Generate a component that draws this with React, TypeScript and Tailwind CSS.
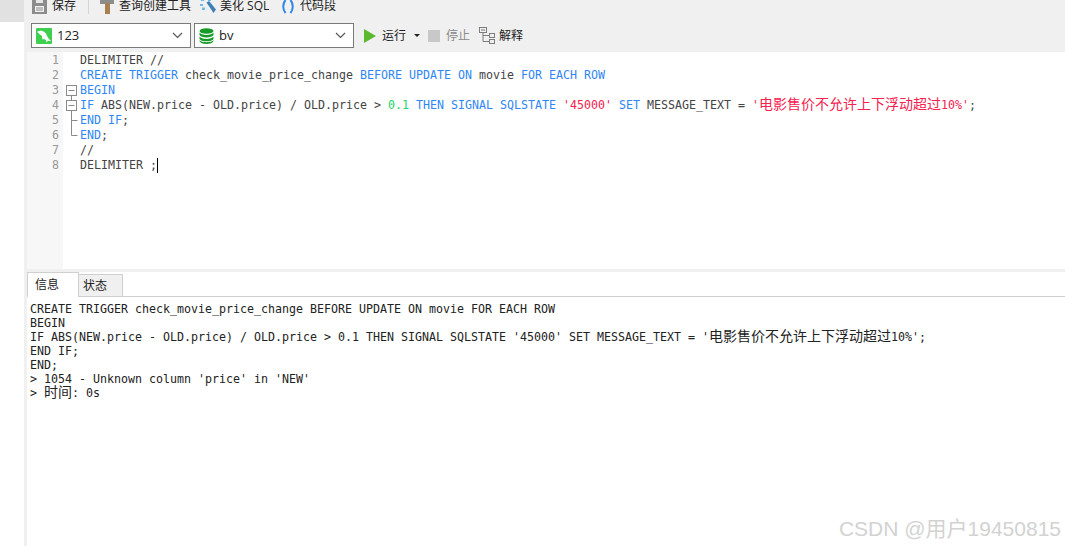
import React from 'react';

const ui = "font-['Open_Sans','Noto_Sans_CJK_SC',sans-serif]";
const mono = "font-['DejaVu_Sans_Mono','Noto_Sans_CJK_SC',monospace]";

const Kw = ({ children }: { children: React.ReactNode }) => <span className="text-[#2f86f5]">{children}</span>;
const Str = ({ children }: { children: React.ReactNode }) => <span className="text-[#f5214f]">{children}</span>;
const Num = ({ children }: { children: React.ReactNode }) => <span className="text-[#22d46a]">{children}</span>;
const Cjk = ({ children }: { children: React.ReactNode }) => <span className="text-[14px] leading-[0]">{children}</span>;

const codeLines: React.ReactNode[] = [
  <>DELIMITER //</>,
  <>
    <Kw>CREATE TRIGGER</Kw> check_movie_price_change <Kw>BEFORE UPDATE ON</Kw> movie <Kw>FOR EACH ROW</Kw>
  </>,
  <Kw>BEGIN</Kw>,
  <>
    <Kw>IF</Kw> ABS(NEW.price - OLD.price) / OLD.price &gt; <Num>0.1</Num> <Kw>THEN SIGNAL SQLSTATE</Kw> <Str>'45000'</Str> <Kw>SET</Kw>{' '}
    MESSAGE_TEXT = <Str>'<Cjk>电影售价不允许上下浮动超过</Cjk>10%'</Str>;
  </>,
  <>
    <Kw>END IF</Kw>;
  </>,
  <>
    <Kw>END</Kw>;
  </>,
  <>//</>,
  <>
    DELIMITER ;<span className="inline-block w-px h-[15px] bg-black align-top" />
  </>,
];

const logLines: React.ReactNode[] = [
  'CREATE TRIGGER check_movie_price_change BEFORE UPDATE ON movie FOR EACH ROW',
  'BEGIN',
  <>
    IF ABS(NEW.price - OLD.price) / OLD.price &gt; 0.1 THEN SIGNAL SQLSTATE '45000' SET MESSAGE_TEXT = '<Cjk>电影售价不允许上下浮动超过</Cjk>10%';
  </>,
  'END IF;',
  'END;',
  "> 1054 - Unknown column 'price' in 'NEW'",
  <>
    &gt; <Cjk>时间</Cjk>: 0s
  </>,
];

const FoldMark = ({ kind }: { kind: string }) => (
  <svg width="17" height="15" viewBox="0 0 17 15" className="block" fill="none" stroke="#8a8a8a">
    {kind === 'first' && (
      <>
        <rect x="3.5" y="2.5" width="10" height="10" />
        <path d="M5.5 7.5h6" />
        <path d="M8.5 12.5v3" />
      </>
    )}
    {kind === 'second' && (
      <>
        <path d="M8.5 0v2.5" />
        <rect x="3.5" y="2.5" width="10" height="10" />
        <path d="M5.5 7.5h6" />
        <path d="M8.5 12.5v3" />
      </>
    )}
    {kind === 'tick' && <path d="M8.5 0v15M8.5 7.5h6" />}
    {kind === 'last' && <path d="M8.5 0v7.5h6" />}
  </svg>
);

const foldKinds = ['', '', 'first', 'second', 'tick', 'last', '', ''];

const MysqlIcon = () => (
  <svg width="16" height="16" viewBox="0 0 16 16" className="shrink-0">
    <rect width="16" height="16" rx="1" fill="#3fcf4f" />
    <path
      d="M1.500 3.500C4 2.300 7 2.700 9 4.500c1.300 1.200 1.800 2.800 2.500 4.200.6 1.300 1.700 2.600 3.500 4.300-1.200.1-2.300-.2-3-.6l-1.500 2.100c-.4-.8-.5-1.700-.4-2.600-.9-.2-1.600-.6-2.100-1L6.500 11.500C6 10.500 6 9.500 6.200 8.600 5.400 7.500 4.800 6.800 3.800 6.400 3.200 5.500 2.500 4.900 1.500 4.500z"
      fill="#fff"
    />
  </svg>
);

const DbIcon = () => (
  <svg width="15" height="16" viewBox="0 0 15 16" className="shrink-0">
    <ellipse cx="7.500" cy="3" rx="7" ry="2.800" fill="#179a28" />
    <path d="M.5 4.600c1 1.600 3.600 2.400 7 2.400s6-.8 7-2.400V7c-.8 1.500-3.600 2.400-7 2.400S1.300 8.500.5 7z" fill="#179a28" />
    <path d="M.5 8.600c1 1.500 3.600 2.300 7 2.300s6-.8 7-2.300V11c-.8 1.500-3.600 2.300-7 2.300S1.300 12.500.5 11z" fill="#179a28" />
    <path d="M.5 12.300c1 1.300 3.600 1.900 7 1.900s6-.6 7-1.900V13c-.6 1.800-3.600 3-7 3s-6.400-1.200-7-3z" fill="#179a28" />
  </svg>
);

const Chevron = () => (
  <svg width="11" height="7" viewBox="0 0 11 7" className="shrink-0" fill="none" stroke="#555" strokeWidth="1.200">
    <path d="M1 1l4.500 4.500L10 1" />
  </svg>
);

const Combo = ({ icon, label }: { icon: React.ReactNode; label: string }) => (
  <div className="flex items-center w-[160px] h-[25px] border border-[#7a7a7a] bg-white pl-1 pr-[7px]">
    {icon}
    <span className="ml-[5px] flex-1 text-[13px] text-[#222]">{label}</span>
    <Chevron />
  </div>
);

const SaveIcon = () => (
  <svg width="15" height="15" viewBox="0 0 15 15" className="shrink-0">
    <path d="M0 0h15v15H0z" fill="#8c8c8c" />
    <rect x="4" y="0" width="7" height="4" fill="#e6e6e6" />
    <rect x="3" y="7" width="9" height="6" fill="#f0f0f0" />
    <path d="M4 9h7M4 11h7" stroke="#8c8c8c" />
  </svg>
);

const HammerIcon = () => (
  <svg width="14" height="15" viewBox="0 0 14 15" className="shrink-0">
    <rect x="0" y="0" width="14" height="5" fill="#8d8d8d" />
    <rect x="5" y="4" width="5" height="11" fill="#a9804f" />
  </svg>
);

const WandIcon = () => (
  <svg width="16" height="15" viewBox="0 0 16 15" className="shrink-0">
    <path d="M6.500 3.500l2.500-1.500 7 8.500-2.500 3.500z" fill="#3f7fb8" />
    <path d="M1 0h3v2H1zM8 0h3v2H8zM0 5h3v2H0zM2 8.500h3v2.500H2z" fill="#6db9ea" />
  </svg>
);

const BracesIcon = () => (
  <svg width="14" height="15" viewBox="0 0 14 15" className="shrink-0" fill="none" stroke="#2f86e6" strokeWidth="2">
    <path d="M4.500 1C1.500 4.500 1.500 10.500 4.500 14" />
    <path d="M9.500 1c3 3.500 3 9.500 0 13" />
  </svg>
);

const ExplainIcon = () => (
  <svg width="16" height="17" viewBox="0 0 16 17" className="shrink-0" fill="none" stroke="#7d7d7d">
    <rect x=".5" y=".5" width="7" height="5" />
    <rect x="10.500" y="6.500" width="5" height="4" />
    <rect x="10.500" y="12.500" width="5" height="4" />
    <path d="M4 5.500v9h6.500M4 8.500h6.500" />
    <path d="M2 3h4" />
  </svg>
);

export default function App() {
  return (
    <div className={`relative flex w-[1065px] h-[546px] overflow-hidden bg-white ${ui}`}>
      {/* left rail */}
      <div className="w-6 shrink-0">
        <div className="h-[22px] bg-[#e1e1e1]" />
      </div>

      <div className="flex flex-col flex-1 min-w-0 bg-[#f0f0f0]">
        {/* main toolbar, cut off at the top */}
        <div className="h-4 overflow-hidden shrink-0 pl-2 text-[12px] text-[#222]">
          <div className="flex items-center h-4 -mt-[2px]">
            <SaveIcon />
            <span className="ml-[5px] w-[36px]">保存</span>
            <div className="w-px h-4 bg-[#d4d4d4]" />
            <div className="ml-[11px]">
              <HammerIcon />
            </div>
            <span className="ml-[5px] w-[81px]">查询创建工具</span>
            <WandIcon />
            <span className="ml-1 w-[61px]">美化 SQL</span>
            <BracesIcon />
            <span className="ml-[5px]">代码段</span>
          </div>
        </div>

        {/* connection row */}
        <div className="flex items-center h-9 shrink-0 pl-[7px] pt-[3px] text-[12px]">
          <Combo icon={<MysqlIcon />} label="123" />
          <div className="ml-[3px]">
            <Combo icon={<DbIcon />} label="bv" />
          </div>
          <div className="ml-[10px] w-0 h-0 border-y-[7px] border-y-transparent border-l-[12px] border-l-[#5cb82e]" />
          <span className="ml-[6px] text-[#222]">运行</span>
          <div className="ml-2 w-0 h-0 border-x-[3px] border-x-transparent border-t-[3px] border-t-[#222]" />
          <div className="ml-2 w-3 h-3 bg-[#c8c8c8]" />
          <span className="ml-[6px] text-[#8a8a8a]">停止</span>
          <div className="ml-[9px]">
            <ExplainIcon />
          </div>
          <span className="ml-1 text-[#222]">解释</span>
        </div>

        {/* editor */}
        <div className={`flex ml-[3px] h-[217px] shrink-0 bg-white pt-px text-[11.63px] leading-[15px] text-[#444] ${mono}`}>
          <div className="w-9 shrink-0 -mt-px pt-px bg-[#f7f7f7] text-right pr-1 text-[#999]">
            {codeLines.map((_, i) => (
              <div key={i} className="h-[15px]">
                {i + 1}
              </div>
            ))}
          </div>
          <div className="w-[17px] shrink-0">
            {foldKinds.map((kind, i) => (
              <div key={i} className="h-[15px]">
                {kind && <FoldMark kind={kind} />}
              </div>
            ))}
          </div>
          <div className="whitespace-pre">
            {codeLines.map((line, i) => (
              <div key={i} className="h-[15px]">
                {line}
              </div>
            ))}
          </div>
        </div>

        {/* splitter */}
        <div className="h-[3px] shrink-0" />

        {/* result tabs */}
        <div className="flex flex-col flex-1 min-h-0 ml-[3px] bg-white">
          <div className="flex items-end h-[25px] shrink-0 border-b border-[#d0d0d0] bg-white text-[12px] text-[#222]">
            <div className="flex items-center w-[52px] h-[25px] -mb-px pl-[7px] border-x border-t border-[#d0d0d0] bg-white pb-px">信息</div>
            <div className="flex items-center w-[44px] h-[22px] pl-[4px] border-r border-t border-[#d0d0d0] bg-[#f0f0f0]">状态</div>
          </div>
          <div className={`pl-[3px] pt-[5px] whitespace-pre text-[11.63px] leading-[14px] text-[#222] ${mono}`}>
            {logLines.map((line, i) => (
              <div key={i} className="h-[14px]">
                {line}
              </div>
            ))}
          </div>
        </div>
      </div>

      {/* watermark */}
      <div className="absolute right-[4px] bottom-[6px] font-['Liberation_Sans','Noto_Sans_CJK_SC',sans-serif] text-[21px] leading-[22px] text-[#d2d2d2]">
        CSDN @用户19450815
      </div>
    </div>
  );
}
